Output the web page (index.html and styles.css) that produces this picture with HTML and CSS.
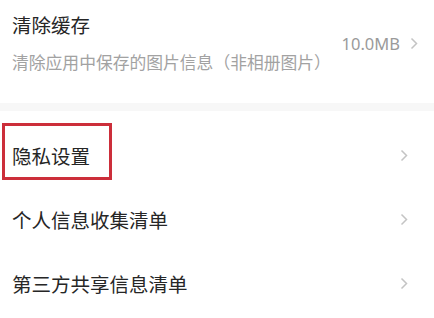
FILE: index.html
```html
<!DOCTYPE html>
<html lang="zh-CN">
<head>
<meta charset="utf-8">
<link rel="stylesheet" href="styles.css">
</head>
<body>
<div class="page">
  <section class="cache">
    <div class="cache-text">
      <div class="title">清除缓存</div>
      <div class="sub">清除应用中保存的图片信息（非相册图片）</div>
    </div>
    <div class="cache-right">
      <span class="size">10.0MB</span>
      <svg class="chev" width="8" height="13" viewBox="0 0 8 13"><polyline points="1.5,1.5 6.5,6.5 1.5,11.5" fill="none" stroke="#c4c4c4" stroke-width="1.5"/></svg>
    </div>
  </section>
  <div class="band"></div>
  <section class="list">
    <div class="row">
      <span class="label">隐私设置</span>
      <svg class="chev" width="8" height="13" viewBox="0 0 8 13"><polyline points="1.5,1.5 6.5,6.5 1.5,11.5" fill="none" stroke="#c4c4c4" stroke-width="1.5"/></svg>
      <div class="mark"></div>
    </div>
    <div class="row">
      <span class="label">个人信息收集清单</span>
      <svg class="chev" width="8" height="13" viewBox="0 0 8 13"><polyline points="1.5,1.5 6.5,6.5 1.5,11.5" fill="none" stroke="#c4c4c4" stroke-width="1.5"/></svg>
    </div>
    <div class="row">
      <span class="label">第三方共享信息清单</span>
      <svg class="chev" width="8" height="13" viewBox="0 0 8 13"><polyline points="1.5,1.5 6.5,6.5 1.5,11.5" fill="none" stroke="#c4c4c4" stroke-width="1.5"/></svg>
    </div>
  </section>
</div>
</body>
</html>
```
FILE: styles.css
```css
html, body {
  margin: 0;
  padding: 0;
  background: #ffffff;
}
body {
  font-family: "Noto Sans CJK SC", "Noto Sans", sans-serif;
  width: 434px;
  height: 318px;
  overflow: hidden;
}
.page {
  display: flex;
  flex-direction: column;
}
.cache {
  height: 103px;
  box-sizing: border-box;
  padding: 12px 16px 0 12px;
  display: flex;
  justify-content: space-between;
}
.cache-text {
  display: flex;
  flex-direction: column;
  gap: 12px;
}
.title {
  font-size: 19.5px;
  line-height: 26px;
  color: #262626;
}
.sub {
  font-size: 16.8px;
  line-height: 24px;
  color: #a2a2a2;
  white-space: nowrap;
}
.cache-right {
  display: flex;
  align-items: center;
  gap: 10px;
  height: 38px;
  margin-top: 12px;
}
.size {
  font-family: "Noto Sans", sans-serif;
  font-size: 16.5px;
  color: #9a9a9a;
}
.chev {
  display: block;
  flex: none;
}
.band {
  height: 8px;
  background: #f7f7f7;
}
.list {
  padding-top: 12px;
  display: flex;
  flex-direction: column;
}
.row {
  position: relative;
  height: 64px;
  display: flex;
  align-items: center;
  justify-content: space-between;
  padding: 0 26px 0 12px;
}
.label {
  font-size: 19.5px;
  color: #262626;
}
.mark {
  position: absolute;
  left: 2px;
  top: 0;
  width: 110px;
  height: 57px;
  box-sizing: border-box;
  border: 3px solid #cc2e3a;
}
```
